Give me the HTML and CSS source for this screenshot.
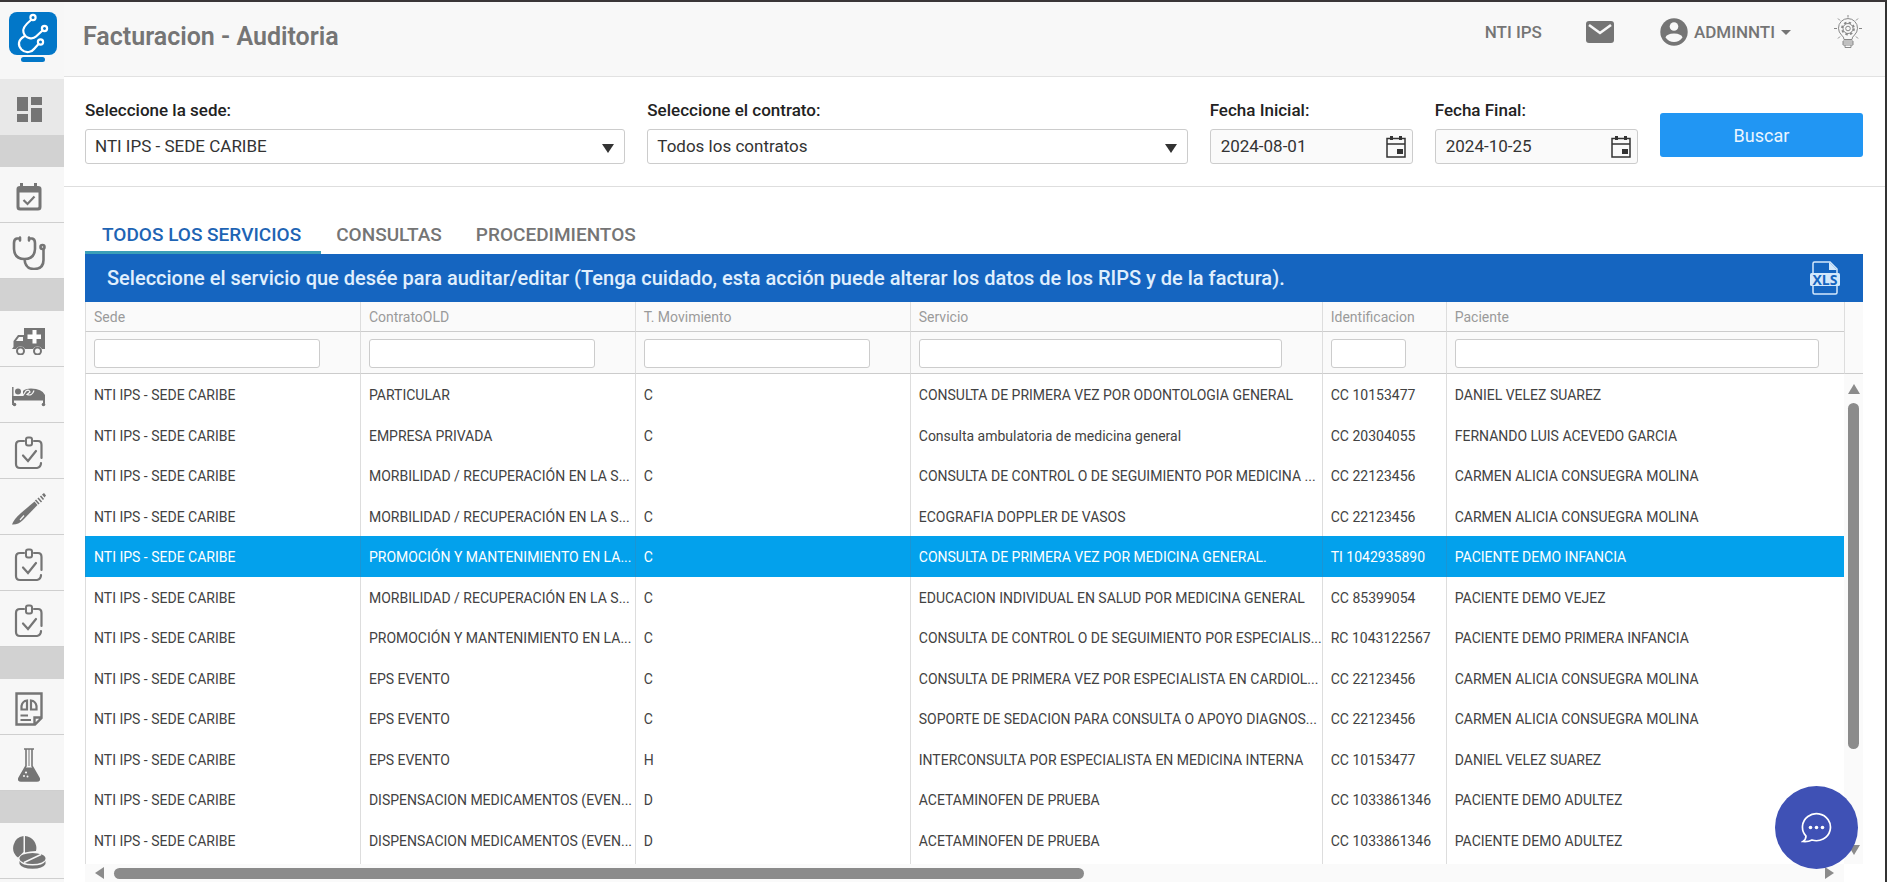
FILE: index.html
```html
<!DOCTYPE html>
<html lang="es">
<head>
<meta charset="utf-8">
<title>Facturacion - Auditoria</title>
<link rel="stylesheet" href="styles.css">
</head>
<body>
<svg class="sprite" aria-hidden="true">
  <symbol id="clip" viewBox="0 0 34 34">
    <path d="M12 5H8Q4 5 4 9V28Q4 32 8 32H25Q29 31 29 27M22 5H26Q29.500 5 29.500 9V22" fill="none" stroke="currentColor" stroke-width="2.200" stroke-linecap="round"/>
    <rect x="14" y="1.500" width="6" height="8" rx="2" fill="none" stroke="currentColor" stroke-width="2"/>
    <path d="M11 19.500L16 25L24 15" fill="none" stroke="currentColor" stroke-width="2.200" stroke-linecap="round"/>
  </symbol>
  <symbol id="cal" viewBox="0 0 22 24">
    <path d="M2 3.500H20V22H2ZM2 9H20" fill="none" stroke="currentColor" stroke-width="1.500"/>
    <path d="M5 1H8V5H5ZM14 1H17V5H14ZM12 14H18V19H12Z" fill="currentColor"/>
  </symbol>
</svg>
<div class="app">
  <nav class="side" aria-label="Menú principal">
    <a class="logo" href="#" aria-label="Inicio">
      <svg width="50" height="52" viewBox="0 0 50 52">
        <rect x="1" y="1" width="48" height="43" rx="8" fill="#0277c8"/>
        <rect x="13" y="46" width="24" height="5" rx="2.500" fill="#0277c8"/>
        <g fill="none" stroke="#fff" stroke-width="2.200" stroke-linecap="round">
          <circle cx="25" cy="6.500" r="2.600"/><circle cx="36.500" cy="17.500" r="2.600"/><circle cx="32.500" cy="31" r="2.600"/>
          <path d="M23 9C18 13 14 17 15.500 21.500C17.500 28 25 28.500 28 25.500L34.500 19.500"/>
          <path d="M16 25.500C10 29 9.500 34 13.500 38.500C18 43 24 41 26.500 37.500L30.500 33"/>
        </g>
      </svg>
    </a>
    <a class="item on" href="#" aria-label="Tablero"><svg width="25" height="25" viewBox="0 0 25 25" fill="currentColor"><path d="M0 0H11V14H0ZM14 0H25V8H14ZM0 17H11V25H0ZM14 11H25V25H14Z"/></svg></a>
    <div class="gap"></div>
    <a class="item" href="#" aria-label="Agenda"><svg width="26" height="28" viewBox="0 0 26 28"><path d="M4 0H7V3H18V0H21V3H22Q25.500 3 25.500 6V24Q25.500 27.500 22 27.500H4Q.500 27.500 .500 24V6Q.500 3 4 3ZM3.500 9.500V23.500Q3.500 24.500 4.500 24.500H21.500Q22.500 24.500 22.500 23.500V9.500Z" fill="currentColor" fill-rule="evenodd"/><path d="M7.500 17L11.500 21L18.500 13.500" fill="none" stroke="currentColor" stroke-width="2.200"/></svg></a>
    <a class="item" href="#" aria-label="Consulta"><svg width="34" height="34" viewBox="0 0 34 34" fill="none" stroke="currentColor" stroke-width="2.600" stroke-linecap="round"><path d="M8 2.500H5Q2 3 2 7V13Q2.500 23 12.500 23Q22.500 23 23 13V7Q23 3 20 2.500H17M8 1.500V4.500M17 1.500V4.500M12.500 23Q13 33 22 33Q31.500 33 31.500 24V13.500"/><circle cx="30.500" cy="11" r="2"/></svg></a>
    <div class="gap"></div>
    <a class="item" href="#" aria-label="Urgencias"><svg width="34" height="28" viewBox="0 0 34 28"><path d="M12 1H33V22H30A5 5 0 0 0 21 22H13A5 5 0 0 0 4 22H0L1.500 20V14L6 8H12Z" fill="currentColor"/><path d="M11 10V14H4L7 10Z" fill="#f7f7f7"/><path d="M20.500 3H24.500V7.500H29V12H24.500V16.500H20.500V12H15.500V7.500H20.500Z" fill="#fff"/><g fill="#f7f7f7" stroke="currentColor" stroke-width="2"><circle cx="8.500" cy="24" r="3.500"/><circle cx="25.500" cy="24" r="3.500"/></g></svg></a>
    <a class="item" href="#" aria-label="Hospitalización"><svg width="34" height="21" viewBox="0 0 34 21"><path d="M.800 1V19M32 14V18" stroke="currentColor" stroke-width="1.400" fill="none"/><path d="M0 14.500V10H33V14.500ZM11 10V5Q13 2.500 19 2.500Q30 2.500 33 9V10Z" fill="currentColor"/><circle cx="6" cy="5.500" r="3" fill="currentColor"/><path d="M2 9.500H11L14 5Q17 3 18 6L15 8.500Q20 10.500 22 4.500" fill="none" stroke="#f7f7f7" stroke-width="1.200"/><path d="M1 14V17M32 14V17" stroke="currentColor" stroke-width="2"/><circle cx="2.500" cy="18.500" r="1.800" fill="currentColor"/><circle cx="31.500" cy="18.500" r="1.800" fill="currentColor"/></svg></a>
    <a class="item" href="#" aria-label="Órdenes"><svg width="34" height="34"><use href="#clip"/></svg></a>
    <a class="item" href="#" aria-label="Cirugía"><svg width="34" height="32" viewBox="0 0 34 32"><path d="M0 31.500Q2 26 9 20L22.500 8.500L25.500 12L11 27Q6 32 0 31.500Z" fill="currentColor"/><path d="M23.500 7L27 11M26 5L29.500 9M28.500 3L31.500 6.500" stroke="currentColor" stroke-width="1.600"/><path d="M30 1.500L32 0L34 2.500L32.500 4.500Z" fill="currentColor"/><path d="M8 27L12 22.500" stroke="#f7f7f7" stroke-width="1.200"/></svg></a>
    <a class="item" href="#" aria-label="Autorizaciones"><svg width="34" height="34"><use href="#clip"/></svg></a>
    <a class="item" href="#" aria-label="Seguimiento"><svg width="34" height="34"><use href="#clip"/></svg></a>
    <div class="gap"></div>
    <a class="item" href="#" aria-label="Imágenes"><svg width="28" height="34" viewBox="0 0 28 34" fill="none" stroke="currentColor" stroke-width="2.400"><path d="M1.500 1.500H26.500V26L20 32.500H1.500ZM26.500 25.500H19.500V32.500"/><path d="M12 8.500V17.500H6.500V14Q7.500 9 12 8.500ZM16 8.500V17.500H21.500V14Q20.500 9 16 8.500Z" stroke-width="2.200"/><path d="M5.500 23.500H13M5.500 28H16" stroke-width="2"/></svg></a>
    <a class="item" href="#" aria-label="Laboratorio"><svg width="22" height="34" viewBox="0 0 22 34"><path d="M6 1H16M8 1V18L1 30Q0 33 3 33H19Q22 33 21 30L14 18V1" fill="none" stroke="currentColor" stroke-width="1.600"/><path d="M11 1V18" stroke="currentColor" stroke-width="1"/><path d="M7.500 19.500H14.500L21 30Q22 33 19 33H3Q0 33 1 30Z" fill="currentColor"/><g fill="#f7f7f7"><circle cx="8" cy="24.500" r="1.100"/><circle cx="6" cy="28" r="1"/><circle cx="9.500" cy="28.500" r="1"/></g></svg></a>
    <div class="gap"></div>
    <a class="item" href="#" aria-label="Farmacia"><svg width="34" height="33" viewBox="0 0 34 33" fill="currentColor"><path d="M11.500 0V16L6 21.500A12 12 0 0 1 11.500 0ZM13 0A12 12 0 0 1 24 15Q18 15 13 16.500Z"/><ellipse cx="20.500" cy="22.500" rx="13" ry="5.600"/><path d="M7.500 25Q10 29.500 20.500 29.500Q31 29.500 33.500 25V28Q31 32.800 20.500 32.800Q10 32.800 7.500 28Z"/><path d="M12 26.500L29 18.500" stroke="#f7f7f7" stroke-width="1.400"/></svg></a>
  </nav>
  <div class="page">
    <header class="top">
      <h1>Facturacion - Auditoria</h1>
      <div class="tools">
        <span class="org">NTI IPS</span>
        <button class="plain mail" aria-label="Mensajes"><svg width="28" height="22" viewBox="0 0 28 22"><rect width="28" height="22" rx="3" fill="currentColor"/><path d="M3 4L14 12L25 4" fill="none" stroke="#f8f8f8" stroke-width="2.600"/></svg></button>
        <button class="plain user"><svg width="28" height="28" viewBox="0 0 28 28"><circle cx="14" cy="14" r="13.700" fill="currentColor"/><circle cx="14" cy="8.500" r="4.300" fill="#f8f8f8"/><path d="M5.500 19.500Q6.500 15.800 14 15.500Q21.500 15.800 22.500 19.500Q19 24 14 24Q9 24 5.500 19.500Z" fill="#f8f8f8"/></svg><span>ADMINNTI</span><i class="caret"></i></button>
        <button class="plain bulb" aria-label="Ayuda"><svg width="28" height="34" viewBox="0 0 28 34" fill="none" stroke="currentColor"><path d="M10 24.500Q10 22 7.500 20A9.500 9.500 0 1 1 20.500 20Q18 22 18 24.500Z"/><path d="M9 26H19V30H9ZM9 28H19M11 30V32.500H17V30"/><circle cx="14" cy="13.500" r="6" stroke-width="1.800" stroke-dasharray="2.400 2.310"/><circle cx="14" cy="13.500" r="5"/><circle cx="14" cy="13.500" r="2.300"/><path d="M14 0V2.500M0 13.500H3M25 13.500H28M4 3.500L6 5.500M24 3.500L22 5.500M4 23.500L6 21.500M24 23.500L22 21.500"/></svg></button>
      </div>
    </header>
    <form class="filters">
      <div class="field"><label for="sede">Seleccione la sede:</label><select id="sede"><option>NTI IPS - SEDE CARIBE</option></select></div>
      <div class="field"><label for="contrato">Seleccione el contrato:</label><select id="contrato"><option>Todos los contratos</option></select></div>
      <div class="field"><label for="ini">Fecha Inicial:</label><div class="date"><input id="ini" type="text" value="2024-08-01"><svg width="22" height="24"><use href="#cal"/></svg></div></div>
      <div class="field"><label for="fin">Fecha Final:</label><div class="date"><input id="fin" type="text" value="2024-10-25"><svg width="22" height="24"><use href="#cal"/></svg></div></div>
      <button class="search" type="button">Buscar</button>
    </form>
    <main class="content">
      <div class="tabs" role="tablist">
        <button class="tab active" role="tab" aria-selected="true">TODOS LOS SERVICIOS</button>
        <button class="tab" role="tab">CONSULTAS</button>
        <button class="tab" role="tab">PROCEDIMIENTOS</button>
      </div>
      <div class="banner">
        <h2>Seleccione el servicio que desée para auditar/editar (Tenga cuidado, esta acción puede alterar los datos de los RIPS y de la factura).</h2>
        <button class="plain" aria-label="Exportar XLS"><svg width="30" height="34" viewBox="0 0 30 34"><path d="M3 12V2.500Q3 1 4.500 1H20L27 8V12M3 24V31.500Q3 33 4.500 33H25.500Q27 33 27 31.500V24" fill="none" stroke="#d3e8fb" stroke-width="1.500"/><path d="M19 1L27 9H19Z" fill="#d3e8fb"/><rect y="12" width="30" height="13" rx="1.500" fill="#d3e8fb"/><text class="xls" x="15" y="23.500" text-anchor="middle">XLS</text></svg></button>
      </div>
      <div class="grid">
        <div class="pane">
          <table>
            <colgroup><col class="w1"><col class="w1"><col class="w1"><col class="w2"><col class="w3"><col class="w4"></colgroup>
            <thead>
              <tr><th>Sede</th><th>ContratoOLD</th><th>T. Movimiento</th><th>Servicio</th><th>Identificacion</th><th>Paciente</th></tr>
              <tr class="find"><td><input aria-label="Sede"></td><td><input aria-label="ContratoOLD"></td><td><input aria-label="T. Movimiento"></td><td><input aria-label="Servicio"></td><td><input aria-label="Identificacion"></td><td><input aria-label="Paciente"></td></tr>
            </thead>
            <tbody>
              <tr><td>NTI IPS - SEDE CARIBE</td><td>PARTICULAR</td><td>C</td><td>CONSULTA DE PRIMERA VEZ POR ODONTOLOGIA GENERAL</td><td>CC 10153477</td><td>DANIEL VELEZ SUAREZ</td></tr>
              <tr><td>NTI IPS - SEDE CARIBE</td><td>EMPRESA PRIVADA</td><td>C</td><td>Consulta ambulatoria de medicina general</td><td>CC 20304055</td><td>FERNANDO LUIS ACEVEDO GARCIA</td></tr>
              <tr><td>NTI IPS - SEDE CARIBE</td><td>MORBILIDAD / RECUPERACIÓN EN LA S...</td><td>C</td><td>CONSULTA DE CONTROL O DE SEGUIMIENTO POR MEDICINA ...</td><td>CC 22123456</td><td>CARMEN ALICIA CONSUEGRA MOLINA</td></tr>
              <tr><td>NTI IPS - SEDE CARIBE</td><td>MORBILIDAD / RECUPERACIÓN EN LA S...</td><td>C</td><td>ECOGRAFIA DOPPLER DE VASOS</td><td>CC 22123456</td><td>CARMEN ALICIA CONSUEGRA MOLINA</td></tr>
              <tr class="sel"><td>NTI IPS - SEDE CARIBE</td><td>PROMOCIÓN Y MANTENIMIENTO EN LA...</td><td>C</td><td>CONSULTA DE PRIMERA VEZ POR MEDICINA GENERAL.</td><td>TI 1042935890</td><td>PACIENTE DEMO INFANCIA</td></tr>
              <tr><td>NTI IPS - SEDE CARIBE</td><td>MORBILIDAD / RECUPERACIÓN EN LA S...</td><td>C</td><td>EDUCACION INDIVIDUAL EN SALUD POR MEDICINA GENERAL</td><td>CC 85399054</td><td>PACIENTE DEMO VEJEZ</td></tr>
              <tr><td>NTI IPS - SEDE CARIBE</td><td>PROMOCIÓN Y MANTENIMIENTO EN LA...</td><td>C</td><td>CONSULTA DE CONTROL O DE SEGUIMIENTO POR ESPECIALIS...</td><td>RC 1043122567</td><td>PACIENTE DEMO PRIMERA INFANCIA</td></tr>
              <tr><td>NTI IPS - SEDE CARIBE</td><td>EPS EVENTO</td><td>C</td><td>CONSULTA DE PRIMERA VEZ POR ESPECIALISTA EN CARDIOL...</td><td>CC 22123456</td><td>CARMEN ALICIA CONSUEGRA MOLINA</td></tr>
              <tr><td>NTI IPS - SEDE CARIBE</td><td>EPS EVENTO</td><td>C</td><td>SOPORTE DE SEDACION PARA CONSULTA O APOYO DIAGNOS...</td><td>CC 22123456</td><td>CARMEN ALICIA CONSUEGRA MOLINA</td></tr>
              <tr><td>NTI IPS - SEDE CARIBE</td><td>EPS EVENTO</td><td>H</td><td>INTERCONSULTA POR ESPECIALISTA EN MEDICINA INTERNA</td><td>CC 10153477</td><td>DANIEL VELEZ SUAREZ</td></tr>
              <tr><td>NTI IPS - SEDE CARIBE</td><td>DISPENSACION MEDICAMENTOS (EVEN...</td><td>D</td><td>ACETAMINOFEN DE PRUEBA</td><td>CC 1033861346</td><td>PACIENTE DEMO ADULTEZ</td></tr>
              <tr><td>NTI IPS - SEDE CARIBE</td><td>DISPENSACION MEDICAMENTOS (EVEN...</td><td>D</td><td>ACETAMINOFEN DE PRUEBA</td><td>CC 1033861346</td><td>PACIENTE DEMO ADULTEZ</td></tr>
              <tr><td></td><td></td><td></td><td></td><td></td><td></td></tr>
            </tbody>
          </table>
        </div>
        <div class="vbar"><div class="vhead"></div><div class="vtrack"><i class="up"></i><div class="vrun"><b class="vthumb"></b></div><i class="down"></i></div></div>
        <div class="hbar"><i class="left"></i><div class="hrun"><b class="hthumb"></b></div><i class="right"></i></div>
      </div>
    </main>
  </div>
</div>
<button class="chat" aria-label="Chat"><svg width="31" height="31" viewBox="0 0 31 31"><path d="M5 24Q1 20 1.500 14A14 13.500 0 1 1 11 28Q7 30 2 29.500Q5 27.500 5 24Z" fill="none" stroke="#fff" stroke-width="1.700"/><g fill="#fff"><circle cx="9.500" cy="15.500" r="1.800"/><circle cx="15.500" cy="15.500" r="1.800"/><circle cx="21.500" cy="15.500" r="1.800"/></g></svg></button>
</body>
</html>
```
FILE: styles.css
```css
* { box-sizing: border-box; }
body { margin: 0; font-family: Roboto, "Liberation Sans", sans-serif; color: #424242; background: #fff; overflow: hidden; }
button, input, select { font: inherit; color: inherit; margin: 0; }
.sprite { position: absolute; width: 0; height: 0; }
.app { display: flex; height: 100vh; border-top: 2px solid #3a3638; border-right: 2px solid #333; }
.side { width: 64px; flex: none; display: flex; flex-direction: column; background: #f7f7f7; color: #757575; }
.side svg { display: block; }
.logo { height: 77px; flex: none; display: flex; justify-content: center; padding: 9px 0 0 2px; }
.item { height: 56px; flex: none; display: flex; align-items: center; justify-content: center; padding: 4px 6px 0 0; color: inherit; border-bottom: 1px solid #cfcfcf; }
.item.on { background: #e8e8e8; border: 0; }
.gap { height: 32px; flex: none; background: #d2d2d2; }
.page { flex: 1; min-width: 0; display: flex; flex-direction: column; }
.top { height: 75px; flex: none; display: flex; justify-content: space-between; background: #f8f8f8; border-bottom: 1px solid #e2e2e2; padding: 0 23px 0 19px; color: #757575; }
h1 { margin: 20px 0 0; font-size: 25px; line-height: 29px; font-weight: 600; }
.tools { display: flex; align-items: center; height: 60px; font-size: 17px; font-weight: 500; }
.plain { border: 0; background: none; padding: 0; color: inherit; display: flex; align-items: center; }
.mail { margin: 0 46px 0 44px; }
.user { gap: 6px; }
.caret { border: 5px solid transparent; border-top-color: currentColor; border-bottom: 0; }
.bulb { margin-left: 43px; color: #888; }
.filters { flex: none; height: 110px; display: grid; grid-template-columns: 540fr 540fr 203fr 203fr 203fr; column-gap: 22px; padding: 22px 22px 0 21px; border-bottom: 1px solid #dedede; align-items: start; font-size: 17px; }
.field { display: flex; flex-direction: column; gap: 8px; min-width: 0; }
label { line-height: 22px; font-weight: 500; color: #222; }
select, .date { height: 35px; border: 1px solid #ccc; border-radius: 3px; width: 100%; font-weight: 400; }
select { appearance: none; padding: 0 9px 1px; background: #fff; color: #333; }
.field:has(select) { position: relative; }
.field:has(select)::after { content: ""; position: absolute; right: 11px; bottom: 11px; border: 6px solid transparent; border-top: 9px solid #333; border-bottom: 0; }
.date { display: flex; align-items: center; justify-content: space-between; padding: 0 5px 0 10px; background: #fafafa; color: #333; }
.date input { border: 0; background: none; padding: 0 0 1px; min-width: 0; flex: 1; }
.search { height: 44px; margin-top: 14px; border: 0; border-radius: 3px; background: #2196f3; color: #eaf5ff; font-size: 18px; font-weight: 400; }
.content { flex: 1; min-height: 0; display: flex; flex-direction: column; padding: 28px 22px 0 21px; }
.tabs { display: flex; gap: 15px; height: 39px; flex: none; }
.tab { border: 0; border-bottom: 3px solid transparent; background: none; padding: 2px 19px 0 0; font-size: 19px; font-weight: 500; color: #757575; }
.tab.active { padding: 2px 20px 0 17px; color: #1e64b4; border-color: #3b9fb8; }
.banner { height: 48px; flex: none; display: flex; align-items: center; justify-content: space-between; padding: 0 23px 0 22px; background: #1565c0; color: #e0effd; }
h2 { margin: 0; font-size: 20px; font-weight: 500; white-space: nowrap; }
.xls { font: 700 14px "Open Sans", sans-serif; fill: #1565c0; }
.grid { flex: 1; min-height: 0; display: grid; grid-template-columns: 1fr 19px; grid-template-rows: minmax(0, 1fr) 18px; }
.pane { overflow: hidden; min-width: 0; }
table { width: 100%; table-layout: fixed; border-collapse: separate; border-spacing: 0; font-size: 14px; }
.w1 { width: 15.630%; }
.w2 { width: 23.420%; }
.w3 { width: 7.050%; }
.w4 { width: 22.640%; }
th, td { text-align: left; padding: 0 0 0 8px; border-left: 1px solid #ddd; overflow: hidden; white-space: nowrap; text-overflow: ellipsis; }
th { height: 30px; font-weight: 400; color: #9a9a9a; background: #fafafa; border-bottom: 1px solid #ccc; }
.find td { height: 42px; padding-top: 1px; background: #fafafa; border-bottom: 1px solid #ccc; }
.find input { display: block; height: 29px; width: calc(100% - 40px); border: 1px solid #ccc; border-radius: 3px; background: #fff; }
.find td:last-child input { width: calc(100% - 25px); }
tbody tr { height: 40px; }
tbody tr:nth-child(odd) { height: 41px; }
tbody td { padding-top: 1px; }
.sel td { background: #03a1ec; color: #fff; border-color: #1a95d4; }
.vbar { display: flex; flex-direction: column; }
.vhead { height: 72px; flex: none; background: #fafafa; border-left: 1px solid #ddd; border-bottom: 1px solid #ccc; }
.vtrack { flex: 1; display: flex; flex-direction: column; align-items: center; padding: 10px 0 9px; background: #fafafa; }
.vrun { flex: 1; padding: 9px 0; width: 11px; }
.vthumb { display: block; height: 80%; border-radius: 6px; background: #8b8b8b; }
.up, .down { border: 6px solid transparent; }
.up { border-top: 0; border-bottom: 10px solid #8b8b8b; }
.down { border-bottom: 0; border-top: 10px solid #8b8b8b; }
.hbar { display: flex; align-items: center; padding: 0 10px 0 10px; background: #fafafa; }
.hrun { flex: 1; padding: 0 10px; }
.hthumb { display: block; width: 57%; height: 11px; border-radius: 6px; background: #8b8b8b; }
.left, .right { border: 6px solid transparent; }
.left { border-left: 0; border-right: 9px solid #8b8b8b; }
.right { border-right: 0; border-left: 9px solid #8b8b8b; }
.chat { position: fixed; right: 29px; bottom: 13px; width: 83px; height: 83px; border: 0; border-radius: 50%; background: #3f51b5; display: flex; align-items: center; justify-content: center; padding: 0; }
```
